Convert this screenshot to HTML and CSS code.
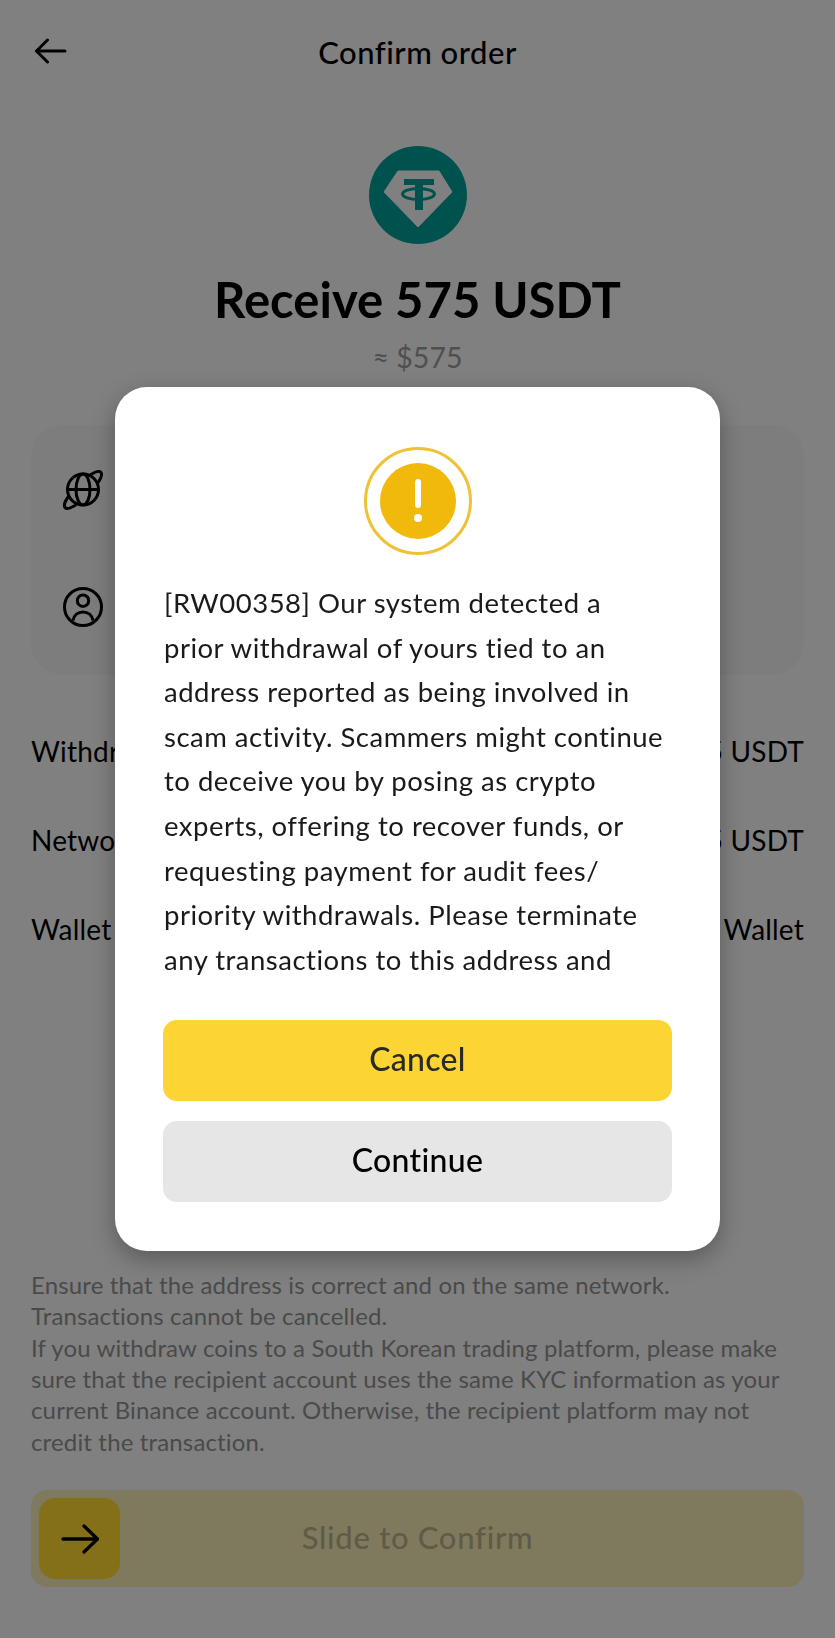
FILE: index.html
```html
<!DOCTYPE html>
<html lang="en">
<head>
    <meta charset="UTF-8">
    <meta name="viewport" content="width=device-width, initial-scale=1.0">
    <title>Confirm order</title>
    <link rel="stylesheet" href="styles.css">
</head>
<body>
    <div class="screen">
        <header class="topbar">
            <svg class="back-icon" viewBox="0 0 33 26" width="33" height="26" fill="none" stroke="#000" stroke-width="3" stroke-linecap="round" stroke-linejoin="round">
                <path d="M31 13H3"/>
                <path d="M13.500 2L2.500 13l11 11"/>
            </svg>
            <h2>Confirm order</h2>
        </header>

        <svg class="coin" viewBox="0 0 98 98" width="98" height="98">
            <circle cx="49" cy="49" r="49" fill="#00524f"/>
            <path d="M29 25H70L83 46 49 81 15 46Z" fill="#808080" stroke="#808080" stroke-width="1" stroke-linejoin="round"/>
            <rect x="35" y="33" width="30" height="6" fill="#00524f"/>
            <rect x="46" y="33" width="8" height="31" fill="#00524f"/>
            <ellipse cx="49.500" cy="48" rx="16" ry="5.500" fill="none" stroke="#00524f" stroke-width="3"/>
        </svg>
        <h1>Receive 575 USDT</h1>
        <p class="approx">≈ $575</p>

        <section class="card">
            <svg class="card-icon" viewBox="0 0 40 40" width="40" height="40" fill="none" stroke="#000" stroke-width="3" stroke-linecap="round">
                <circle cx="20" cy="19.500" r="15.500"/>
                <ellipse cx="20" cy="19.500" rx="7" ry="15.500"/>
                <path d="M5 19.500H35"/>
                <path d="M5.500 26.500C2 31 .8 35.500 2 37.500 3.500 39.500 8.500 37.500 12 35.500"/>
                <path d="M28 4.500C32 2 36 .8 37.500 2 39.500 3.500 38 8 35.500 12"/>
            </svg>
            <svg class="card-icon" viewBox="0 0 40 40" width="40" height="40" fill="none" stroke="#000" stroke-width="3">
                <circle cx="20" cy="20" r="18.500"/>
                <circle cx="20" cy="13.700" r="5.700"/>
                <path d="M10 33.500C11 28 15 25 20 25S29 28 30 33.500"/>
            </svg>
        </section>

        <div class="rows">
            <div class="row"><span>Withdrawal amount</span><span>575 USDT</span></div>
            <div class="row"><span>Network fee</span><span>0.5 USDT</span></div>
            <div class="row"><span>Wallet</span><span>Funding Wallet</span></div>
        </div>

        <p class="note">Ensure that the address is correct and on the same network.<br>Transactions cannot be cancelled.<br>If you withdraw coins to a South Korean trading platform, please make sure that the recipient account uses the same KYC information as your current Binance account. Otherwise, the recipient platform may not credit the transaction.</p>

        <div class="slider">
            <div class="slider-thumb">
                <svg viewBox="0 0 38 30" width="38" height="30" fill="none" stroke="#000" stroke-width="3.300" stroke-linecap="round" stroke-linejoin="round">
                    <path d="M2 15H36"/>
                    <path d="M23 2l13.500 13L23 28"/>
                </svg>
            </div>
            <span class="slider-label">Slide to Confirm</span>
        </div>
    </div>

    <div class="overlay">
        <div class="modal">
            <svg class="warn" viewBox="0 0 108 108" width="108" height="108">
                <circle cx="54" cy="54" r="52.500" fill="none" stroke="#eec234" stroke-width="3"/>
                <circle cx="54" cy="54" r="38" fill="#f0b90b"/>
                <rect x="51" y="32" width="6" height="29" rx="3" fill="#fff"/>
                <circle cx="54" cy="71" r="4" fill="#fff"/>
            </svg>
            <p class="message">[RW00358] Our system detected a prior withdrawal of yours tied to an address reported as being involved in scam activity. Scammers might continue to deceive you by posing as crypto experts, offering to recover funds, or requesting payment for audit fees/ priority withdrawals. Please terminate any transactions to this address and</p>
            <button class="btn btn-primary">Cancel</button>
            <button class="btn btn-secondary">Continue</button>
        </div>
    </div>
</body>
</html>
```

FILE: styles.css
```css
* {
    box-sizing: border-box;
}
body {
    font-family: 'Lato', 'Liberation Sans', sans-serif;
    font-variant-ligatures: none;
    margin: 0;
    height: 1638px;
    overflow: hidden;
    background: #808080;
    color: #000;
}
.screen {
    display: flex;
    flex-direction: column;
    align-items: center;
    padding: 0 31px;
}
.topbar {
    width: 100%;
    height: 104px;
    display: flex;
    align-items: center;
    justify-content: center;
    position: relative;
}
.topbar h2 {
    margin: 0;
    font-size: 31px;
    font-weight: 500;
    letter-spacing: 0.5px;
}
.back-icon {
    position: absolute;
    left: 3px;
    top: 38px;
}
.coin {
    margin-top: 42px;
}
h1 {
    margin: 25px 0 0;
    font-size: 49px;
    line-height: 60px;
    font-weight: 700;
}
.approx {
    margin: 8px 0 0;
    font-size: 28.500px;
    line-height: 40px;
    color: #4f4f4f;
}
.card {
    width: 100%;
    height: 250px;
    margin-top: 48px;
    padding: 45px 32px;
    display: flex;
    flex-direction: column;
    gap: 77px;
    background: #7d7d7d;
    border-radius: 32px;
}
.rows {
    width: 100%;
    margin-top: 56px;
    display: flex;
    flex-direction: column;
    gap: 49px;
}
.row {
    display: flex;
    justify-content: space-between;
    font-size: 28px;
    line-height: 40px;
    letter-spacing: 0.2px;
}
.note {
    width: 100%;
    height: 188px;
    margin: 320px 0 0;
    font-size: 24px;
    line-height: 31.350px;
    letter-spacing: 0.15px;
    color: #4a4a4a;
}
.slider {
    width: 100%;
    height: 97px;
    margin-top: 33px;
    padding: 8px;
    display: flex;
    align-items: center;
    position: relative;
    background: #7f7a5e;
    border-radius: 16px;
}
.slider-thumb {
    width: 81px;
    height: 81px;
    display: flex;
    align-items: center;
    justify-content: center;
    background: #85701a;
    border-radius: 16px;
}
.slider-label {
    position: absolute;
    left: 0;
    right: 0;
    padding-bottom: 4px;
    text-align: center;
    font-size: 31px;
    font-weight: 500;
    letter-spacing: 0.7px;
    color: #5f5b47;
}
.overlay {
    position: fixed;
    inset: 0;
    display: flex;
    align-items: center;
    justify-content: center;
}
.modal {
    width: 605px;
    height: 864px;
    padding: 60px 48px 0;
    display: flex;
    flex-direction: column;
    align-items: center;
    background: #fff;
    border-radius: 32px;
    box-shadow: 0 8px 24px rgba(0, 0, 0, 0.3);
}
.message {
    width: 100%;
    height: 402px;
    margin: 26px 0 37px;
    padding: 0 8px 0 1px;
    overflow: hidden;
    font-size: 27.500px;
    line-height: 44.600px;
    letter-spacing: 0.5px;
    color: #1a1a1a;
}
.btn {
    width: 100%;
    height: 81px;
    flex-shrink: 0;
    padding: 0 0 4px;
    border: none;
    border-radius: 14px;
    font-family: inherit;
    font-size: 32px;
    font-weight: 500;
    letter-spacing: 0.3px;
    cursor: pointer;
}
.btn-primary {
    background: #fcd535;
    color: #2a2a22;
}
.btn-secondary {
    margin-top: 20px;
    background: #e6e6e6;
    color: #000;
}
```
